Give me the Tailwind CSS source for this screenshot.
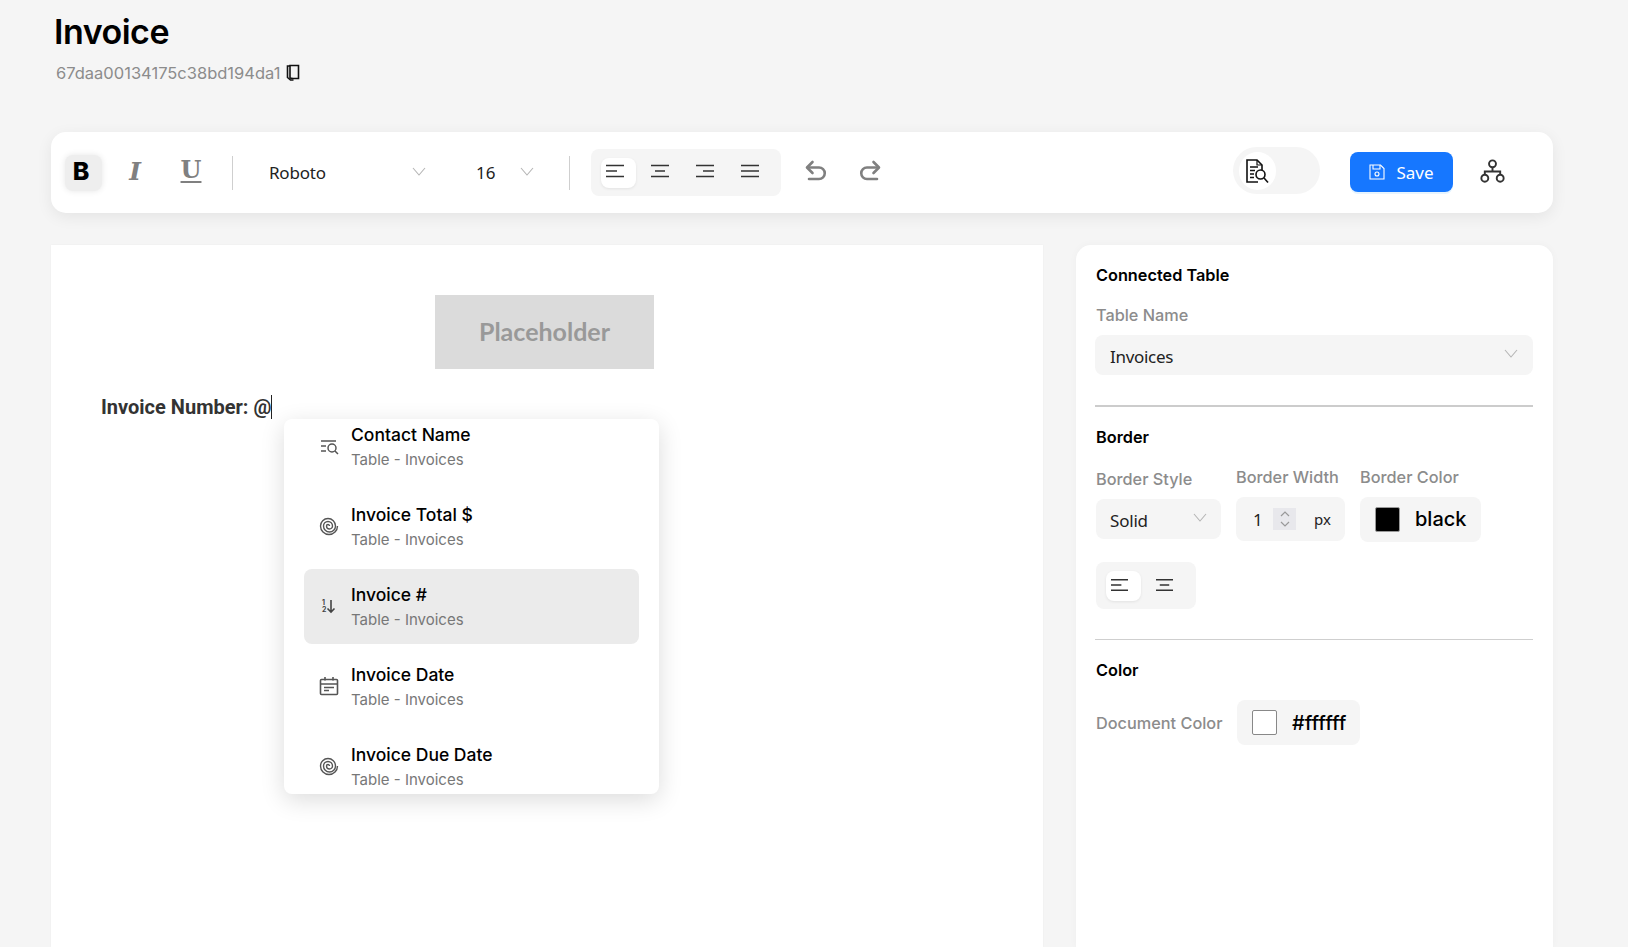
<!DOCTYPE html>
<html lang="en">
<head>
    <meta charset="UTF-8">
    <meta name="viewport" content="width=device-width, initial-scale=1.0">
    <title>Invoice</title>
    <script src="https://cdn.jsdelivr.net/npm/@tailwindcss/browser@4"></script>
</head>
<body class="h-screen overflow-hidden bg-[#f5f5f5] font-['Inter',sans-serif] text-black">
    <!-- Page header -->
    <header class="h-[132px] pl-[54px] pt-[12px]">
        <h1 class="text-[34px] leading-[40px] font-semibold tracking-[-0.5px]">Invoice</h1>
        <div class="mt-[9px] ml-[2px] flex items-center gap-[6px] text-[16.5px] leading-[24px] text-[#8c8c8c]">
            <span>67daa00134175c38bd194da1</span>
            <svg class="w-[14px] h-[18px] -mt-[3px]" viewBox="0 0 14 18" fill="none" stroke="#111" stroke-width="1.6"><path d="M4 2.5h8.5v13H7l-3-0.5z"/><path d="M4 3H1.5v11.5L4.5 17h3"/></svg>
        </div>
    </header>

    <!-- Toolbar -->
    <div class="ml-[51px] w-[1502px] h-[81px] bg-white rounded-[15px] shadow-[0_4px_16px_rgba(0,0,0,0.07)] flex items-center pl-[14px] pr-[47px]">
        <button class="w-[37px] h-[36px] rounded-lg bg-[#eeeeee] shadow-[0_0_6px_rgba(0,0,0,0.1)] flex items-center justify-center pr-[5px] pb-[2px] font-['Inter'] font-extrabold text-[25px] leading-none">B</button>
        <button class="ml-[17px] w-[32px] pb-[2px] text-center font-['DejaVu_Serif',serif] italic font-bold text-[25px] leading-none text-[#808080]">I</button>
        <button class="ml-[24px] w-[32px] mb-[5px] text-center font-['DejaVu_Serif',serif] font-bold text-[24px] leading-none text-[#808080] underline decoration-[2px] underline-offset-[3px]">U</button>
        <div class="ml-[25px] w-px h-[34px] bg-[#cfcfcf]"></div>

        <div class="ml-[36px] w-[157px] flex items-center justify-between font-['Noto_Sans',sans-serif] text-[17px] tracking-[-0.2px] text-[#222]">
            <span class="pt-[1px]">Roboto</span>
            <svg class="w-[14px] h-[9px] -mt-[3px]" viewBox="0 0 14 9" fill="none" stroke="#b5b5b5" stroke-width="1.1"><path d="M1 1l6 7 6-7"/></svg>
        </div>
        <div class="ml-[51px] w-[57px] flex items-center justify-between font-['Noto_Sans',sans-serif] text-[17px] text-[#222]">
            <span class="pt-[1px] -ml-[1px]">16</span>
            <svg class="w-[14px] h-[9px] -mt-[3px]" viewBox="0 0 14 9" fill="none" stroke="#b5b5b5" stroke-width="1.1"><path d="M1 1l6 7 6-7"/></svg>
        </div>
        <div class="ml-[35px] w-px h-[34px] bg-[#cfcfcf]"></div>

        <div class="ml-[21px] w-[190px] h-[47px] rounded-lg bg-[#f5f5f5] flex items-center gap-[10px] px-[10px]">
            <button class="w-[35px] h-[30px] pl-[5px] pb-[3px] rounded-lg bg-white shadow-[0_1px_3px_rgba(0,0,0,0.08)]">
                <svg class="w-[18px] h-[14px]" viewBox="0 0 18 14" stroke="#333" stroke-width="1.6"><path d="M0 1.5h18M0 7h11M0 12.5h18"/></svg>
            </button>
            <button class="w-[35px] h-[30px] pl-[5px] pb-[3px]">
                <svg class="w-[18px] h-[14px]" viewBox="0 0 18 14" stroke="#333" stroke-width="1.6"><path d="M0 1.5h18M4 7h10M0 12.5h18"/></svg>
            </button>
            <button class="w-[35px] h-[30px] pl-[5px] pb-[3px]">
                <svg class="w-[18px] h-[14px]" viewBox="0 0 18 14" stroke="#333" stroke-width="1.6"><path d="M0 1.5h18M7 7h11M0 12.5h18"/></svg>
            </button>
            <button class="w-[35px] h-[30px] pl-[5px] pb-[3px]">
                <svg class="w-[18px] h-[14px]" viewBox="0 0 18 14" stroke="#333" stroke-width="1.6"><path d="M0 1.5h18M0 7h18M0 12.5h18"/></svg>
            </button>
        </div>

        <button class="ml-[23px] w-[24px] mb-[3px]">
            <svg class="w-[24px] h-[24px]" viewBox="0 0 24 24" fill="none" stroke="#808080" stroke-width="2.6" stroke-linecap="round" stroke-linejoin="round"><path d="M8.5 3L3 8.500l5.500 5.500"/><path d="M4 8.500h11a5.750 5.750 0 0 1 0 11.500H5"/></svg>
        </button>
        <button class="ml-[30px] w-[24px] mb-[3px]">
            <svg class="w-[24px] h-[24px]" viewBox="0 0 24 24" fill="none" stroke="#808080" stroke-width="2.6" stroke-linecap="round" stroke-linejoin="round"><path d="M15.500 3L21 8.500 15.500 14"/><path d="M20 8.500H9a5.750 5.750 0 0 0 0 11.500h10"/></svg>
        </button>

        <!-- View toggle -->
        <div class="ml-auto mb-[4px] w-[87px] h-[47px] rounded-full bg-[#f5f5f5] flex items-center pl-[6px]">
            <div class="w-[37px] h-[38px] rounded-full bg-white flex items-center justify-center pr-[1px]">
                <svg class="w-[24px] h-[26px]" viewBox="0 0 24 26" fill="none" stroke="#111" stroke-width="1.6"><path d="M13 24H2V2h10l5 5v5"/><path d="M12 2v5h5" stroke-width="1.2"/><path d="M5 9h8M5 12.5h5M5 16h4M5 19.5h4" stroke-width="1.7"/><circle cx="15.5" cy="16.5" r="4.5"/><path d="M19 20l4 4.5"/></svg>
            </div>
        </div>

        <button class="ml-[30px] w-[103px] h-[40px] rounded-lg bg-[#1677ff] shadow-[0_2px_0_rgba(5,145,255,0.1)] -mt-[1px] flex items-center justify-center gap-[11px] font-['Noto_Sans',sans-serif] text-[17px] text-white">
            <svg class="w-[16px] h-[16px]" viewBox="0 0 16 16" fill="none" stroke="#fff" stroke-width="1.1"><path d="M1 1h10.500L15 4.500V15H1z"/><path d="M4 1v4h7V1"/><circle cx="8" cy="10" r="2"/></svg>
            <span class="pt-[1px]">Save</span>
        </button>
        <button class="ml-[27px] w-[26px] mb-[2px]">
            <svg class="w-[25px] h-[25px]" viewBox="0 0 26 26" fill="none" stroke="#333" stroke-width="2"><circle cx="13" cy="5" r="3.600"/><circle cx="5" cy="20" r="3.600"/><circle cx="21" cy="20" r="3.600"/><path d="M13 8.600V13M5 16.400V13h16v3.400"/></svg>
        </button>
    </div>

    <div class="mt-[32px] ml-[51px] flex items-stretch gap-[33px] h-[702px]">
        <!-- Document canvas -->
        <div class="relative w-[992px] bg-white pt-[50px] shadow-[0_0_2px_rgba(0,0,0,0.04)]">
            <div class="ml-[384px] w-[219px] h-[74px] bg-[#dbdbdb] flex items-center justify-center font-['Lato',sans-serif] font-bold text-[25px] text-[#999999]">Placeholder</div>
            <p class="mt-[26px] ml-[50px] flex items-center font-['Roboto',sans-serif] font-bold text-[20px] leading-[24px] text-[#333]">Invoice Number: @<span class="w-px h-[24px] bg-[#222]"></span></p>

            <!-- Mention menu -->
            <div class="absolute left-[233px] top-[174px] w-[375px] h-[375px] overflow-hidden rounded-lg bg-white shadow-[0_6px_24px_rgba(0,0,0,0.14)] px-[20px]">
                <div class="-mt-[10px] flex flex-col gap-[5px]">
                    <div class="h-[75px] rounded-lg flex items-center pl-[13px]">
                        <svg class="w-[24px] h-[24px] shrink-0" viewBox="0 0 24 24" fill="none" stroke="#555" stroke-width="1.5"><path d="M4 6h15M4 11h5M4 16h5"/><circle cx="15" cy="13" r="4"/><path d="M18 16l3 3"/></svg>
                        <div class="ml-[10px]">
                            <div class="text-[17.5px] leading-[24px] font-medium">Contact Name</div>
                            <div class="mt-[2px] text-[15px] leading-[22px] text-[#777]">Table - Invoices</div>
                        </div>
                    </div>
                    <div class="h-[75px] rounded-lg flex items-center pl-[13px]">
                        <svg class="w-[24px] h-[24px] shrink-0 -mt-[2px]" viewBox="0 0 24 24" fill="none" stroke="#555" stroke-width="1.4"><path d="M12.500 12A1.500 1.500 0 0 0 9.500 12A3 3 0 0 0 15.500 12A4.500 4.500 0 0 0 6.500 12A6 6 0 0 0 18.500 12A7.500 7.500 0 0 0 3.500 12A8.500 8.500 0 0 0 20.500 12"/></svg>
                        <div class="ml-[10px]">
                            <div class="text-[17.5px] leading-[24px] font-medium">Invoice Total $</div>
                            <div class="mt-[2px] text-[15px] leading-[22px] text-[#777]">Table - Invoices</div>
                        </div>
                    </div>
                    <div class="h-[75px] rounded-lg bg-[#ebebeb] flex items-center pl-[13px]">
                        <svg class="w-[24px] h-[24px] shrink-0 -mt-[2px]" viewBox="0 0 24 24" fill="none" stroke="#444" stroke-width="1.6"><text x="5" y="11" font-family="Inter" font-size="7" font-weight="700" fill="#444" stroke="none">1</text><text x="5" y="18" font-family="Inter" font-size="7" font-weight="700" fill="#444" stroke="none">2</text><path d="M14 6v12M10.500 14.500L14 18l3.500-3.500"/></svg>
                        <div class="ml-[10px]">
                            <div class="text-[17.5px] leading-[24px] font-medium">Invoice #</div>
                            <div class="mt-[2px] text-[15px] leading-[22px] text-[#777]">Table - Invoices</div>
                        </div>
                    </div>
                    <div class="h-[75px] rounded-lg flex items-center pl-[13px]">
                        <svg class="w-[24px] h-[24px] shrink-0 -mt-[2px]" viewBox="0 0 24 24" fill="none" stroke="#555" stroke-width="1.6"><rect x="3.500" y="5.500" width="17" height="15" rx="1"/><path d="M3.500 10h17M8 3v3.500M16 3v3.500M7 13.500h10M7 16.500h5"/></svg>
                        <div class="ml-[10px]">
                            <div class="text-[17.5px] leading-[24px] font-medium">Invoice Date</div>
                            <div class="mt-[2px] text-[15px] leading-[22px] text-[#777]">Table - Invoices</div>
                        </div>
                    </div>
                    <div class="h-[75px] rounded-lg flex items-center pl-[13px]">
                        <svg class="w-[24px] h-[24px] shrink-0 -mt-[2px]" viewBox="0 0 24 24" fill="none" stroke="#555" stroke-width="1.4"><path d="M12.500 12A1.500 1.500 0 0 0 9.500 12A3 3 0 0 0 15.500 12A4.500 4.500 0 0 0 6.500 12A6 6 0 0 0 18.500 12A7.500 7.500 0 0 0 3.500 12A8.500 8.500 0 0 0 20.500 12"/></svg>
                        <div class="ml-[10px]">
                            <div class="text-[17.5px] leading-[24px] font-medium">Invoice Due Date</div>
                            <div class="mt-[2px] text-[15px] leading-[22px] text-[#777]">Table - Invoices</div>
                        </div>
                    </div>
                </div>
            </div>
        </div>

        <!-- Settings panel -->
        <aside class="w-[477px] bg-white rounded-t-[15px] shadow-[0_0_8px_rgba(0,0,0,0.03)] pt-[18px] pl-[19px] pr-[20px]">
            <h3 class="text-[16.3px] leading-[24px] font-semibold pl-px">Connected Table</h3>
            <div class="mt-[16px] pl-px text-[16.3px] leading-[24px] font-medium text-[#8c8c8c]">Table Name</div>
            <div class="mt-[8px] h-[40px] rounded-lg bg-[#f5f5f5] flex items-center justify-between pl-[15px] pr-[15px] font-['Noto_Sans',sans-serif] text-[17px] tracking-[-0.3px] text-[#222]">
                <span class="pt-[3px]">Invoices</span>
                <svg class="w-[14px] h-[9px] -mt-[3px]" viewBox="0 0 14 9" fill="none" stroke="#b5b5b5" stroke-width="1.1"><path d="M1 1l6 7 6-7"/></svg>
            </div>
            <div class="mt-[30px] h-[2px] bg-[#cccccc]"></div>

            <h3 class="mt-[18px] pl-px text-[16.3px] leading-[24px] font-semibold">Border</h3>
            <div class="mt-[16px] ml-px flex items-start gap-[15px]">
                <div class="w-[125px] pt-[2px]">
                    <div class="text-[16.3px] leading-[24px] font-medium text-[#8c8c8c]">Border Style</div>
                    <div class="mt-[8px] h-[40px] rounded-lg bg-[#f5f5f5] flex items-center justify-between pl-[14px] pr-[14px] font-['Noto_Sans',sans-serif] text-[17px] tracking-[-0.2px] text-[#222]">
                        <span class="pt-[3px]">Solid</span>
                        <svg class="w-[14px] h-[9px] -mt-[3px]" viewBox="0 0 14 9" fill="none" stroke="#b5b5b5" stroke-width="1.1"><path d="M1 1l6 7 6-7"/></svg>
                    </div>
                </div>
                <div class="w-[109px]">
                    <div class="text-[16.3px] leading-[24px] font-medium text-[#8c8c8c]">Border Width</div>
                    <div class="mt-[8px] h-[44px] rounded-lg bg-[#f5f5f5] flex items-center pl-[17px] font-['Noto_Sans',sans-serif] text-[17px] text-[#222]">
                        <span class="w-[20px] pt-[1px]">1</span>
                        <div class="w-[23px] h-[22px] bg-[#e8e8ec] flex items-center justify-center">
                            <svg class="w-[10px] h-[18px]" viewBox="0 0 10 18" fill="none" stroke="#999" stroke-width="1.2"><path d="M1 6l4-4 4 4M1 12l4 4 4-4"/></svg>
                        </div>
                        <span class="ml-[18px] text-[15px] pt-[1px]">px</span>
                    </div>
                </div>
                <div class="w-[121px]">
                    <div class="text-[16.3px] leading-[24px] font-medium text-[#8c8c8c]">Border Color</div>
                    <div class="mt-[8px] h-[45px] rounded-lg bg-[#f5f5f5] flex items-center pl-[15px]">
                        <span class="w-[25px] h-[25px] bg-black border border-[#999] rounded-[2px]"></span>
                        <span class="ml-[15px] text-[20px] font-medium -mt-[2px]">black</span>
                    </div>
                </div>
            </div>

            <div class="mt-[20px] ml-px w-[100px] h-[47px] rounded-lg bg-[#f5f5f5] flex items-center gap-[10px] px-[10px]">
                <button class="w-[35px] h-[30px] pl-[5px] pb-[2px] rounded-lg bg-white shadow-[0_1px_3px_rgba(0,0,0,0.08)]">
                    <svg class="w-[17px] h-[14px]" viewBox="0 0 18 14" stroke="#333" stroke-width="1.5"><path d="M0 1.500h18M0 7h11M0 12.500h18"/></svg>
                </button>
                <button class="w-[35px] h-[30px] pl-[5px] pb-[2px]">
                    <svg class="w-[17px] h-[14px]" viewBox="0 0 18 14" stroke="#333" stroke-width="1.5"><path d="M0 1.500h18M4 7h10M0 12.500h18"/></svg>
                </button>
            </div>
            <div class="mt-[30px] h-px bg-[#cfcfcf]"></div>

            <h3 class="mt-[18px] pl-px text-[16.3px] leading-[24px] font-semibold">Color</h3>
            <div class="mt-[18px] ml-px flex items-center">
                <div class="w-[141px] mt-[1px] text-[16.3px] leading-[24px] font-medium text-[#8c8c8c]">Document Color</div>
                <div class="w-[123px] h-[45px] rounded-lg bg-[#f5f5f5] flex items-center pl-[15px]">
                    <span class="w-[25px] h-[25px] bg-white border border-[#888] rounded-[2px]"></span>
                    <span class="ml-[15px] text-[20px] font-medium">#ffffff</span>
                </div>
            </div>
        </aside>
    </div>
</body>
</html>
